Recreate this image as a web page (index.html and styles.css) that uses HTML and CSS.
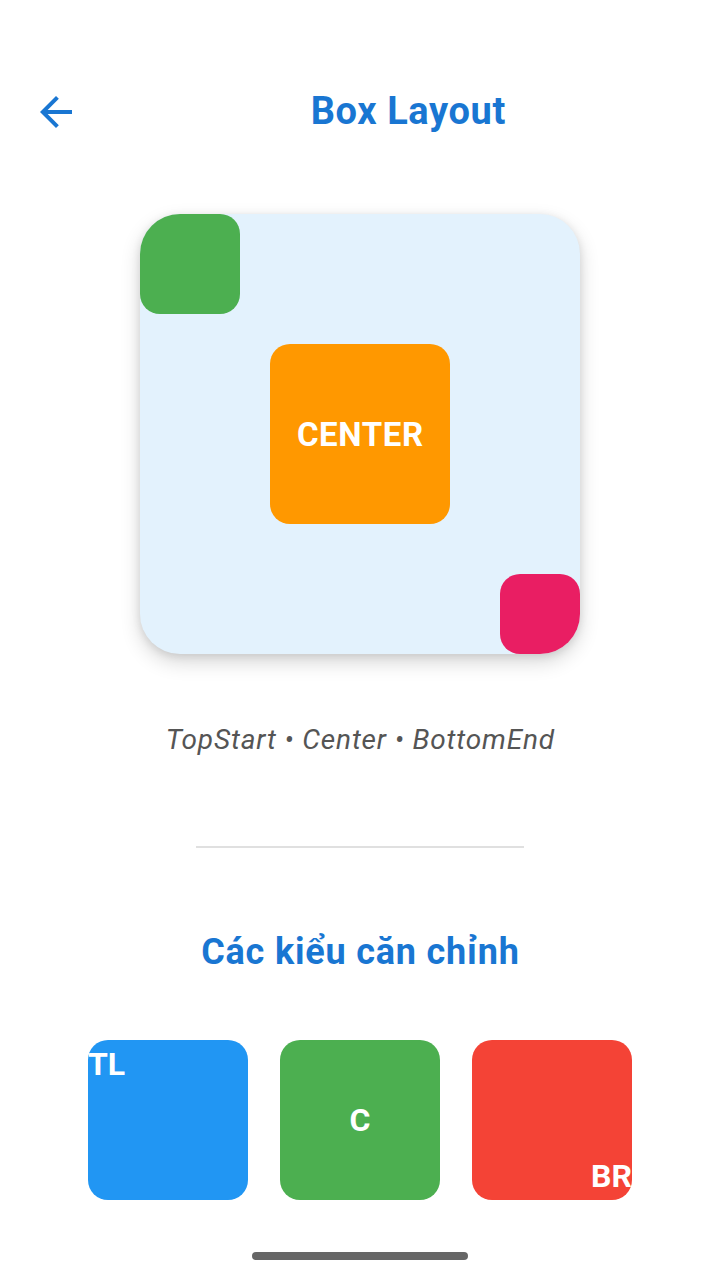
FILE: index.html
```html
<!DOCTYPE html>
<html lang="vi">
<head>
<meta charset="utf-8">
<title>Box Layout</title>
<link rel="stylesheet" href="styles.css">
</head>
<body>
<div class="screen">
  <header class="topbar">
    <div class="nav">
      <svg class="back" viewBox="0 0 24 24" width="48" height="48" aria-label="Back">
        <path d="M20 11H7.83l5.59-5.59L12 4l-8 8 8 8 1.41-1.41L7.83 13H20v-2z" fill="#1976D2"/>
      </svg>
    </div>
    <h1 class="title">Box Layout</h1>
  </header>

  <div class="stage">
    <div class="box-demo">
      <div class="chip chip-green"></div>
      <div class="chip chip-orange">CENTER</div>
      <div class="chip chip-pink"></div>
    </div>
  </div>

  <p class="caption">TopStart • Center • BottomEnd</p>

  <div class="divider"></div>

  <h2 class="heading">Các kiểu căn chỉnh</h2>

  <div class="align-row">
    <div class="tile tile-blue"><span class="label label-tl">TL</span></div>
    <div class="tile tile-green"><span class="label label-c">C</span></div>
    <div class="tile tile-red"><span class="label label-br">BR</span></div>
  </div>

  <div class="home-bar"></div>
</div>
</body>
</html>
```

FILE: styles.css
```css
* { box-sizing: border-box; }

html, body {
  margin: 0;
  padding: 0;
  background: #ffffff;
}

body {
  font-family: Roboto, "Noto Sans", "Liberation Sans", sans-serif;
}

.screen {
  width: 720px;
  height: 1280px;
  display: flex;
  flex-direction: column;
  align-items: center;
  overflow: hidden;
}

/* Header */
.topbar {
  width: 100%;
  margin-top: 88px;
  height: 48px;
  display: flex;
  align-items: center;
}

.nav {
  width: 96px;
  height: 48px;
  padding-left: 32px;
  display: flex;
  align-items: center;
}

.back { display: block; }

.title {
  flex: 1;
  margin: 0 0 2px 0;
  padding-left: 0.6px;
  text-align: center;
  color: #1976D2;
  font-size: 38px;
  font-weight: 700;
  line-height: 44px;
  letter-spacing: 0.6px;
}

/* Box demo */
.stage {
  margin-top: 78px;
}

.box-demo {
  width: 440px;
  height: 440px;
  border-radius: 40px;
  background: #E3F2FD;
  overflow: hidden;
  display: grid;
  grid-template-columns: 100%;
  grid-template-rows: 100%;
  box-shadow: 0 8px 20px rgba(0, 0, 0, 0.16), 0 2px 8px rgba(0, 0, 0, 0.10);
}

.chip {
  grid-area: 1 / 1;
  border-radius: 20px;
}

.chip-green {
  width: 100px;
  height: 100px;
  background: #4CAF50;
  justify-self: start;
  align-self: start;
}

.chip-orange {
  width: 180px;
  height: 180px;
  background: #FF9800;
  justify-self: center;
  align-self: center;
  display: flex;
  align-items: center;
  justify-content: center;
  padding-left: 0.6px;
  color: #ffffff;
  font-size: 33px;
  font-weight: 700;
  letter-spacing: 0.6px;
}

.chip-pink {
  width: 80px;
  height: 80px;
  background: #E91E63;
  justify-self: end;
  align-self: end;
}

/* Caption */
.caption {
  margin: 66px 0 0 0;
  padding-left: 0.85px;
  font-size: 28px;
  line-height: 40px;
  font-style: italic;
  color: #555555;
  letter-spacing: 0.85px;
}

.divider {
  margin-top: 86px;
  width: 328px;
  height: 2px;
  background: #E0E0E0;
}

.heading {
  margin: 84px 0 0 0;
  padding-left: 0.8px;
  color: #1976D2;
  font-size: 36px;
  font-weight: 700;
  line-height: 40px;
  letter-spacing: 0.8px;
}

/* Alignment tiles */
.align-row {
  margin-top: 68px;
  display: flex;
  gap: 32px;
}

.tile {
  width: 160px;
  height: 160px;
  border-radius: 20px;
  overflow: hidden;
  display: flex;
}

.tile-blue { background: #2196F3; align-items: flex-start; justify-content: flex-start; }
.tile-green { background: #4CAF50; align-items: center; justify-content: center; }
.tile-red { background: #F44336; align-items: flex-end; justify-content: flex-end; }

.label {
  color: #ffffff;
  font-size: 32px;
  font-weight: 700;
  line-height: 48px;
  white-space: nowrap;
}

.home-bar {
  margin-top: 52px;
  width: 216px;
  height: 8px;
  border-radius: 4px;
  background: #666666;
}
```
